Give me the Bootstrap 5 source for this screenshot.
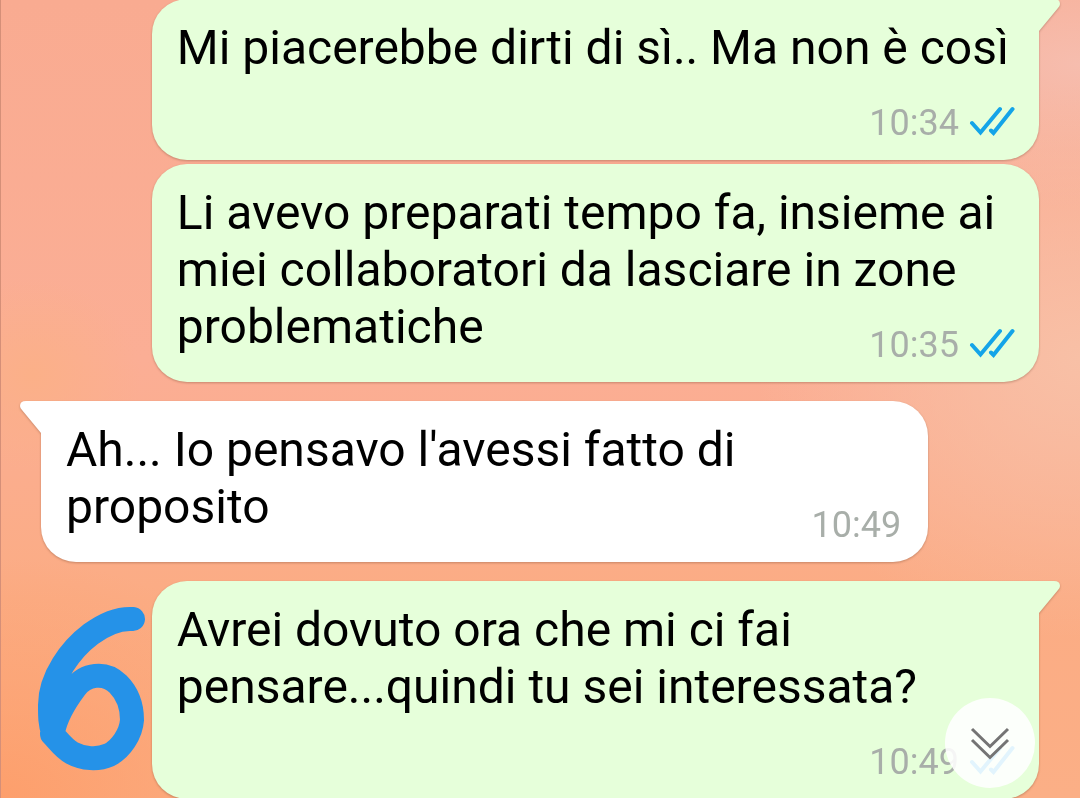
<!DOCTYPE html>
<html lang="it">
<head>
<meta charset="utf-8">
<meta name="viewport" content="width=device-width, initial-scale=1">
<title>Chat</title>
<link href="https://cdn.jsdelivr.net/npm/bootstrap@5.3.0/dist/css/bootstrap.min.css" rel="stylesheet">
<style>
  body {
    font-family: Roboto, "Liberation Sans", sans-serif;
    color: #000;
  }
  .chat {
    padding: 0 41px;
    background:
      linear-gradient(90deg, #d58f78 1px, transparent 1px),
      radial-gradient(ellipse 30% 30% at 0 100%, #fd9f6c, transparent),
      radial-gradient(ellipse 10% 12% at 3% 47%, #fbb088, transparent),
      radial-gradient(ellipse 30% 35% at 100% 45%, #f8c0a6, transparent),
      radial-gradient(ellipse 25% 18% at 100% 8%, #f6bdae, transparent),
      linear-gradient(180deg, #f9ab91 0%, #fbae95 45%, #fbac84 75%, #fbaf86 100%);
  }
  .bubble {
    --fill: #fff;
    width: 88.9%;
    padding: 20px 24px 0 25px;
    border-radius: 35px;
    background: var(--fill);
    filter: drop-shadow(0 1px 1px rgba(80, 40, 20, .3));
    font-size: 48px;
    line-height: 57px;
  }
  .bubble-out { --fill: #e6ffda; }
  .chat-start { margin-top: -1px; }
  .gap-same { margin-top: 4px; }
  .gap-turn { margin-top: 19px; }
  .tail-right { border-top-right-radius: 0; }
  .tail-left { border-top-left-radius: 0; }
  .tail {
    width: 22px;
    height: 34px;
    top: 0;
    fill: var(--fill);
  }
  .tail-right .tail { left: 100%; margin-left: -1px; }
  .tail-left .tail { right: 100%; margin-right: -1px; transform: scaleX(-1); }
  .meta {
    gap: 10px;
    padding: 26px 0 16px;
    font-size: 36px;
    line-height: 42px;
    color: #a8aea9;
  }
  .bubble-in .meta { margin-right: 3px; }
  .ticks { width: 46px; height: 32px; margin-top: -5px; fill: none; stroke: #14a4e8; stroke-width: 4; stroke-linecap: round; }
  .scribble { left: 34px; bottom: 22px; width: 114px; height: 174px; fill: none; stroke: #2592e8; stroke-width: 24; }
  .jump {
    right: 45px;
    bottom: 10px;
    width: 90px;
    height: 90px;
    background: rgba(255, 255, 255, .88);
  }
  .jump svg { width: 40px; height: 34px; fill: none; stroke: #747474; stroke-width: 3; }
</style>
</head>
<body>
<main class="chat position-relative vh-100 overflow-hidden d-flex flex-column">

  <article class="bubble bubble-out tail-right chat-start position-relative align-self-end flex-shrink-0 clearfix">
    <svg class="tail position-absolute" viewBox="0 0 22 34" aria-hidden="true"><path d="M0 0H16Q22 0 22 5Q22 7 20 9L1 32V34H0Z"/></svg>
    <span>Mi piacerebbe dirti di sì.. Ma non è così</span>
    <div class="meta float-end d-flex align-items-center"><time>10:34</time><svg class="ticks" viewBox="0 0 46 32" role="img" aria-label="Letto"><path d="M3 18L11.500 27.500L31 4M22 25.500L24.500 28L43.500 4"/></svg></div>
  </article>

  <article class="bubble bubble-out gap-same position-relative align-self-end flex-shrink-0 clearfix">
    <span>Li avevo preparati tempo fa, insieme ai miei collaboratori da lasciare in zone problematiche</span>
    <div class="meta float-end d-flex align-items-center"><time>10:35</time><svg class="ticks" viewBox="0 0 46 32" role="img" aria-label="Letto"><path d="M3 18L11.500 27.500L31 4M22 25.500L24.500 28L43.500 4"/></svg></div>
  </article>

  <article class="bubble bubble-in tail-left gap-turn position-relative align-self-start flex-shrink-0 clearfix">
    <svg class="tail position-absolute" viewBox="0 0 22 34" aria-hidden="true"><path d="M0 0H16Q22 0 22 5Q22 7 20 9L1 32V34H0Z"/></svg>
    <span>Ah... Io pensavo l'avessi fatto di proposito</span>
    <div class="meta float-end d-flex align-items-center"><time>10:49</time></div>
  </article>

  <article class="bubble bubble-out tail-right gap-turn position-relative align-self-end flex-shrink-0 clearfix">
    <svg class="tail position-absolute" viewBox="0 0 22 34" aria-hidden="true"><path d="M0 0H16Q22 0 22 5Q22 7 20 9L1 32V34H0Z"/></svg>
    <span>Avrei dovuto ora che mi ci fai pensare...quindi tu sei interessata?</span>
    <div class="meta float-end d-flex align-items-center"><time>10:49</time><svg class="ticks" viewBox="0 0 46 32" role="img" aria-label="Letto"><path d="M3 18L11.500 27.500L31 4M22 25.500L24.500 28L43.500 4"/></svg></div>
  </article>

  <!-- freehand marker stroke -->
  <svg class="scribble position-absolute" viewBox="34 602 114 174" stroke-linecap="round" stroke-linejoin="round" aria-hidden="true">
    <path d="M133 619C119 618 106 623 91 634C71 649 50 677 50 705C50 716 50 724 53 732C56 716 66 700 75 688C85 674 105 671 118 684C128 694 132 707 132 720C131 734 121 749 109 755C98 760 83 759 72 753C63 748 58 740 52 734"/>
  </svg>

  <button type="button" class="jump btn border-0 p-0 rounded-circle position-absolute d-flex align-items-center justify-content-center" aria-label="Vai in fondo">
    <svg viewBox="0 0 40 34" aria-hidden="true"><path d="M2 3L20 20.500L38 3M2 14L20 31.500L38 14"/></svg>
  </button>
</main>
<script src="https://cdn.jsdelivr.net/npm/bootstrap@5.3.0/dist/js/bootstrap.bundle.min.js"></script>
</body>
</html>
